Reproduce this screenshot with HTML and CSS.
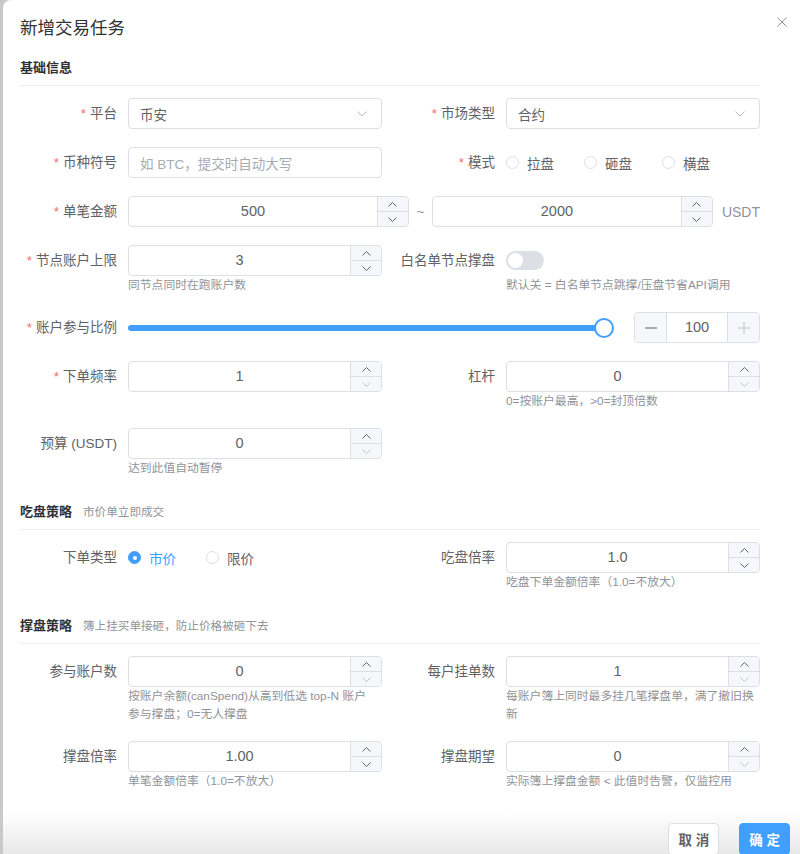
FILE: index.html
```html
<!DOCTYPE html>
<html lang="zh-CN">
<head>
    <meta charset="UTF-8">
    <meta name="viewport" content="width=device-width, initial-scale=1.0">
    <title>新增交易任务</title>
    <link rel="stylesheet" href="styles.css">
</head>
<body>
    <div class="dialog">
        <header class="dialog-header">
            <h2 class="dialog-title">新增交易任务</h2>
            <button class="dialog-close" aria-label="关闭">
                <svg width="10" height="10" viewBox="0 0 10 10"><path d="M0.5 0.5L9.5 9.5M9.5 0.5L0.5 9.5" stroke="currentColor" stroke-width="1" fill="none"/></svg>
            </button>
        </header>

        <div class="dialog-body">
            <div class="section-title">基础信息</div>
            <div class="form-grid">
                <div class="form-item">
                    <label class="form-label required">平台</label>
                    <div class="form-content">
                        <div class="input select">
                            <span>币安</span>
                            <svg class="select-arrow" width="10" height="6" viewBox="0 0 10 6"><polyline points="0.5,0.5 5,5 9.5,0.5" stroke="currentColor" fill="none"/></svg>
                        </div>
                    </div>
                </div>
                <div class="form-item">
                    <label class="form-label required">市场类型</label>
                    <div class="form-content">
                        <div class="input select">
                            <span>合约</span>
                            <svg class="select-arrow" width="10" height="6" viewBox="0 0 10 6"><polyline points="0.5,0.5 5,5 9.5,0.5" stroke="currentColor" fill="none"/></svg>
                        </div>
                    </div>
                </div>

                <div class="form-item">
                    <label class="form-label required">币种符号</label>
                    <div class="form-content">
                        <div class="input"><span class="placeholder">如 BTC，提交时自动大写</span></div>
                    </div>
                </div>
                <div class="form-item">
                    <label class="form-label required">模式</label>
                    <div class="form-content radio-group">
                        <span class="radio"><i class="radio-dot"></i>拉盘</span>
                        <span class="radio"><i class="radio-dot"></i>砸盘</span>
                        <span class="radio"><i class="radio-dot"></i>横盘</span>
                    </div>
                </div>

                <div class="form-item wide">
                    <label class="form-label required">单笔金额</label>
                    <div class="form-content range">
                        <div class="number">
                            <span class="number-value">500</span>
                            <span class="number-ctrl">
                                <span><svg width="9" height="5" viewBox="0 0 9 5"><polyline points="0.5,4.5 4.5,0.5 8.5,4.5" stroke="currentColor" fill="none"/></svg></span>
                                <span><svg width="9" height="5" viewBox="0 0 9 5"><polyline points="0.5,0.5 4.5,4.5 8.5,0.5" stroke="currentColor" fill="none"/></svg></span>
                            </span>
                        </div>
                        <span class="range-sep">~</span>
                        <div class="number">
                            <span class="number-value">2000</span>
                            <span class="number-ctrl">
                                <span><svg width="9" height="5" viewBox="0 0 9 5"><polyline points="0.5,4.5 4.5,0.5 8.5,4.5" stroke="currentColor" fill="none"/></svg></span>
                                <span><svg width="9" height="5" viewBox="0 0 9 5"><polyline points="0.5,0.5 4.5,4.5 8.5,0.5" stroke="currentColor" fill="none"/></svg></span>
                            </span>
                        </div>
                        <span class="unit">USDT</span>
                    </div>
                </div>

                <div class="form-item">
                    <label class="form-label required">节点账户上限</label>
                    <div class="form-content">
                        <div class="number">
                            <span class="number-value">3</span>
                            <span class="number-ctrl">
                                <span><svg width="9" height="5" viewBox="0 0 9 5"><polyline points="0.5,4.5 4.5,0.5 8.5,4.5" stroke="currentColor" fill="none"/></svg></span>
                                <span><svg width="9" height="5" viewBox="0 0 9 5"><polyline points="0.5,0.5 4.5,4.5 8.5,0.5" stroke="currentColor" fill="none"/></svg></span>
                            </span>
                        </div>
                        <div class="help">同节点同时在跑账户数</div>
                    </div>
                </div>
                <div class="form-item">
                    <label class="form-label">白名单节点撑盘</label>
                    <div class="form-content">
                        <div class="switch-wrap"><span class="switch"></span></div>
                        <div class="help">默认关 = 白名单节点跳撑/压盘节省API调用</div>
                    </div>
                </div>

                <div class="form-item wide">
                    <label class="form-label required">账户参与比例</label>
                    <div class="form-content slider-row">
                        <div class="slider">
                            <div class="slider-bar"><span class="slider-thumb"></span></div>
                        </div>
                        <div class="stepper">
                            <span class="stepper-btn">
                                <svg width="12" height="12" viewBox="0 0 12 12"><path d="M0 6H12" stroke="currentColor"/></svg>
                            </span>
                            <span class="stepper-value">100</span>
                            <span class="stepper-btn off">
                                <svg width="12" height="12" viewBox="0 0 12 12"><path d="M0 6H12M6 0V12" stroke="currentColor"/></svg>
                            </span>
                        </div>
                    </div>
                </div>

                <div class="form-item">
                    <label class="form-label required">下单频率</label>
                    <div class="form-content">
                        <div class="number">
                            <span class="number-value">1</span>
                            <span class="number-ctrl">
                                <span><svg width="9" height="5" viewBox="0 0 9 5"><polyline points="0.5,4.5 4.5,0.5 8.5,4.5" stroke="currentColor" fill="none"/></svg></span>
                                <span class="off"><svg width="9" height="5" viewBox="0 0 9 5"><polyline points="0.5,0.5 4.5,4.5 8.5,0.5" stroke="currentColor" fill="none"/></svg></span>
                            </span>
                        </div>
                    </div>
                </div>
                <div class="form-item">
                    <label class="form-label">杠杆</label>
                    <div class="form-content">
                        <div class="number">
                            <span class="number-value">0</span>
                            <span class="number-ctrl">
                                <span><svg width="9" height="5" viewBox="0 0 9 5"><polyline points="0.5,4.5 4.5,0.5 8.5,4.5" stroke="currentColor" fill="none"/></svg></span>
                                <span class="off"><svg width="9" height="5" viewBox="0 0 9 5"><polyline points="0.5,0.5 4.5,4.5 8.5,0.5" stroke="currentColor" fill="none"/></svg></span>
                            </span>
                        </div>
                        <div class="help">0=按账户最高，&gt;0=封顶倍数</div>
                    </div>
                </div>

                <div class="form-item">
                    <label class="form-label">预算 (USDT)</label>
                    <div class="form-content">
                        <div class="number">
                            <span class="number-value">0</span>
                            <span class="number-ctrl">
                                <span><svg width="9" height="5" viewBox="0 0 9 5"><polyline points="0.5,4.5 4.5,0.5 8.5,4.5" stroke="currentColor" fill="none"/></svg></span>
                                <span class="off"><svg width="9" height="5" viewBox="0 0 9 5"><polyline points="0.5,0.5 4.5,4.5 8.5,0.5" stroke="currentColor" fill="none"/></svg></span>
                            </span>
                        </div>
                        <div class="help">达到此值自动暂停</div>
                    </div>
                </div>
            </div>

            <div class="section-title">吃盘策略<span class="section-sub">市价单立即成交</span></div>
            <div class="form-grid">
                <div class="form-item">
                    <label class="form-label">下单类型</label>
                    <div class="form-content radio-group">
                        <span class="radio checked"><i class="radio-dot"></i>市价</span>
                        <span class="radio"><i class="radio-dot"></i>限价</span>
                    </div>
                </div>
                <div class="form-item">
                    <label class="form-label">吃盘倍率</label>
                    <div class="form-content">
                        <div class="number">
                            <span class="number-value">1.0</span>
                            <span class="number-ctrl">
                                <span><svg width="9" height="5" viewBox="0 0 9 5"><polyline points="0.5,4.5 4.5,0.5 8.5,4.5" stroke="currentColor" fill="none"/></svg></span>
                                <span><svg width="9" height="5" viewBox="0 0 9 5"><polyline points="0.5,0.5 4.5,4.5 8.5,0.5" stroke="currentColor" fill="none"/></svg></span>
                            </span>
                        </div>
                        <div class="help">吃盘下单金额倍率（1.0=不放大）</div>
                    </div>
                </div>
            </div>

            <div class="section-title">撑盘策略<span class="section-sub">簿上挂买单接砸，防止价格被砸下去</span></div>
            <div class="form-grid">
                <div class="form-item">
                    <label class="form-label">参与账户数</label>
                    <div class="form-content">
                        <div class="number">
                            <span class="number-value">0</span>
                            <span class="number-ctrl">
                                <span><svg width="9" height="5" viewBox="0 0 9 5"><polyline points="0.5,4.5 4.5,0.5 8.5,4.5" stroke="currentColor" fill="none"/></svg></span>
                                <span class="off"><svg width="9" height="5" viewBox="0 0 9 5"><polyline points="0.5,0.5 4.5,4.5 8.5,0.5" stroke="currentColor" fill="none"/></svg></span>
                            </span>
                        </div>
                        <div class="help">按账户余额(canSpend)从高到低选 top-N 账户<br>参与撑盘；0=无人撑盘</div>
                    </div>
                </div>
                <div class="form-item">
                    <label class="form-label">每户挂单数</label>
                    <div class="form-content">
                        <div class="number">
                            <span class="number-value">1</span>
                            <span class="number-ctrl">
                                <span><svg width="9" height="5" viewBox="0 0 9 5"><polyline points="0.5,4.5 4.5,0.5 8.5,4.5" stroke="currentColor" fill="none"/></svg></span>
                                <span class="off"><svg width="9" height="5" viewBox="0 0 9 5"><polyline points="0.5,0.5 4.5,4.5 8.5,0.5" stroke="currentColor" fill="none"/></svg></span>
                            </span>
                        </div>
                        <div class="help">每账户簿上同时最多挂几笔撑盘单，满了撤旧换新</div>
                    </div>
                </div>

                <div class="form-item">
                    <label class="form-label">撑盘倍率</label>
                    <div class="form-content">
                        <div class="number">
                            <span class="number-value">1.00</span>
                            <span class="number-ctrl">
                                <span><svg width="9" height="5" viewBox="0 0 9 5"><polyline points="0.5,4.5 4.5,0.5 8.5,4.5" stroke="currentColor" fill="none"/></svg></span>
                                <span><svg width="9" height="5" viewBox="0 0 9 5"><polyline points="0.5,0.5 4.5,4.5 8.5,0.5" stroke="currentColor" fill="none"/></svg></span>
                            </span>
                        </div>
                        <div class="help">单笔金额倍率（1.0=不放大）</div>
                    </div>
                </div>
                <div class="form-item">
                    <label class="form-label">撑盘期望</label>
                    <div class="form-content">
                        <div class="number">
                            <span class="number-value">0</span>
                            <span class="number-ctrl">
                                <span><svg width="9" height="5" viewBox="0 0 9 5"><polyline points="0.5,4.5 4.5,0.5 8.5,4.5" stroke="currentColor" fill="none"/></svg></span>
                                <span class="off"><svg width="9" height="5" viewBox="0 0 9 5"><polyline points="0.5,0.5 4.5,4.5 8.5,0.5" stroke="currentColor" fill="none"/></svg></span>
                            </span>
                        </div>
                        <div class="help">实际簿上撑盘金额 &lt; 此值时告警，仅监控用</div>
                    </div>
                </div>
            </div>
        </div>

        <footer class="dialog-footer">
            <button class="btn">取 消</button>
            <button class="btn btn-primary">确 定</button>
        </footer>
    </div>
</body>
</html>
```

FILE: styles.css
```css
html, body {
    margin: 0;
    height: 854px;
    overflow: hidden;
}
body {
    background-color: #c9c9c9;
    font-family: "Liberation Sans", "Noto Sans CJK SC", sans-serif;
    font-size: 13.5px;
    color: #606266;
}

/* dialog shell */
.dialog {
    position: relative;
    margin-left: 3px;
    height: 854px;
    display: flex;
    flex-direction: column;
    background-color: #fff;
    border-radius: 8px 0 0 0;
}
.dialog-header {
    padding: 16px 40px 0 17px;
}
.dialog-title {
    margin: 0;
    font-size: 17.5px;
    font-weight: 400;
    line-height: 24px;
    color: #303133;
}
.dialog-close {
    position: absolute;
    top: 17px;
    right: 13px;
    padding: 0;
    border: none;
    background: none;
    color: #909399;
    line-height: 0;
}
.dialog-body {
    flex: 1;
    padding: 0 40px 0 17px;
}
.dialog-footer {
    height: 46px;
    box-sizing: border-box;
    padding: 15px 10px 0;
    display: flex;
    justify-content: flex-end;
    gap: 20px;
    background: linear-gradient(#fff 10%, #e8e8e8);
}

/* section headings */
.section-title {
    margin: 7px 0 12px;
    padding-bottom: 7px;
    border-bottom: 1px solid #ebeef5;
    font-size: 13px;
    font-weight: 700;
    line-height: 20px;
    color: #303133;
}
.section-title:first-child {
    margin-top: 18px;
}
.section-sub {
    margin-left: 11px;
    font-size: 11.6px;
    font-weight: 400;
    color: #909399;
}

/* form layout */
.form-grid {
    display: grid;
    grid-template-columns: 1fr 1fr;
    column-gap: 16px;
}
.form-item {
    display: flex;
    margin-bottom: 18px;
}
.form-item.wide {
    grid-column: 1 / -1;
}
.form-label {
    width: 108px;
    flex-shrink: 0;
    box-sizing: border-box;
    padding-right: 11px;
    text-align: right;
    line-height: 31px;
    white-space: nowrap;
}
.form-label.required::before {
    content: "*";
    color: #f56c6c;
    margin-right: 4px;
}
.form-content {
    flex: 1;
    min-width: 0;
}
.help {
    font-size: 11.8px;
    line-height: 18px;
    color: #909399;
}

/* inputs */
.input {
    height: 31px;
    box-sizing: border-box;
    display: flex;
    align-items: center;
    padding: 0 14px 0 11px;
    border: 1px solid #dcdfe6;
    border-radius: 4px;
}
.select span {
    flex: 1;
}
.select-arrow {
    color: #b8bcc4;
}
.placeholder {
    color: #a8abb2;
}

.number {
    height: 31px;
    box-sizing: border-box;
    display: flex;
    border: 1px solid #dcdfe6;
    border-radius: 4px;
    overflow: hidden;
}
.number-value {
    flex: 1;
    text-align: center;
    font-size: 14.5px;
    line-height: 29px;
}
.number-ctrl {
    width: 31px;
    box-sizing: border-box;
    display: flex;
    flex-direction: column;
    border-left: 1px solid #dcdfe6;
    background-color: #f5f7fa;
}
.number-ctrl span {
    flex: 1;
    display: flex;
    align-items: center;
    justify-content: center;
    color: #606266;
}
.number-ctrl span + span {
    border-top: 1px solid #dcdfe6;
}
.number-ctrl span.off {
    color: #c0c4cc;
}

.range {
    display: flex;
    align-items: center;
}
.range .number {
    flex: 1;
}
.range-sep {
    width: 23px;
    text-align: center;
    color: #909399;
}
.unit {
    margin-left: 9px;
    font-size: 14px;
    color: #909399;
}

/* radios */
.radio-group {
    display: flex;
    align-items: center;
    height: 31px;
}
.radio {
    display: flex;
    align-items: center;
    margin-right: 30px;
}
.radio-dot {
    position: relative;
    width: 13px;
    height: 13px;
    box-sizing: border-box;
    margin-right: 8px;
    border: 1px solid #dcdfe6;
    border-radius: 50%;
}
.radio.checked {
    color: #409eff;
}
.radio.checked .radio-dot {
    background-color: #409eff;
    border-color: #409eff;
}
.radio.checked .radio-dot::after {
    content: "";
    position: absolute;
    left: 50%;
    top: 50%;
    width: 4px;
    height: 4px;
    margin: -2px 0 0 -2px;
    border-radius: 50%;
    background-color: #fff;
}

/* switch */
.switch-wrap {
    height: 31px;
    display: flex;
    align-items: center;
}
.switch {
    position: relative;
    width: 38px;
    height: 19px;
    border-radius: 10px;
    background-color: #dcdfe6;
}
.switch::after {
    content: "";
    position: absolute;
    left: 2px;
    top: 2px;
    width: 15px;
    height: 15px;
    border-radius: 50%;
    background-color: #fff;
}

/* slider with stepper */
.slider-row {
    display: flex;
    align-items: center;
}
.slider {
    flex: 1;
    margin-right: 30px;
    height: 31px;
    display: flex;
    align-items: center;
}
.slider-bar {
    position: relative;
    width: 100%;
    height: 6px;
    border-radius: 3px;
    background-color: #409eff;
}
.slider-thumb {
    position: absolute;
    right: -10px;
    top: -7px;
    width: 20px;
    height: 20px;
    box-sizing: border-box;
    border: 2px solid #409eff;
    border-radius: 50%;
    background-color: #fff;
}
.stepper {
    width: 126px;
    height: 31px;
    box-sizing: border-box;
    display: flex;
    border: 1px solid #dcdfe6;
    border-radius: 4px;
    overflow: hidden;
}
.stepper-btn {
    width: 31px;
    display: flex;
    align-items: center;
    justify-content: center;
    background-color: #f5f7fa;
    color: #606266;
}
.stepper-btn:first-child {
    border-right: 1px solid #dcdfe6;
}
.stepper-btn:last-child {
    border-left: 1px solid #dcdfe6;
}
.stepper-btn.off {
    color: #c0c4cc;
}
.stepper-value {
    flex: 1;
    text-align: center;
    font-size: 14.5px;
    line-height: 29px;
}

/* buttons */
.btn {
    height: 32px;
    padding: 0 9px;
    border: 1px solid #dcdfe6;
    border-radius: 4px;
    background-color: #fff;
    color: #606266;
    font-family: inherit;
    font-size: 13.5px;
    font-weight: 700;
}
.btn-primary {
    background-color: #409eff;
    border-color: #409eff;
    color: #fff;
}
```
